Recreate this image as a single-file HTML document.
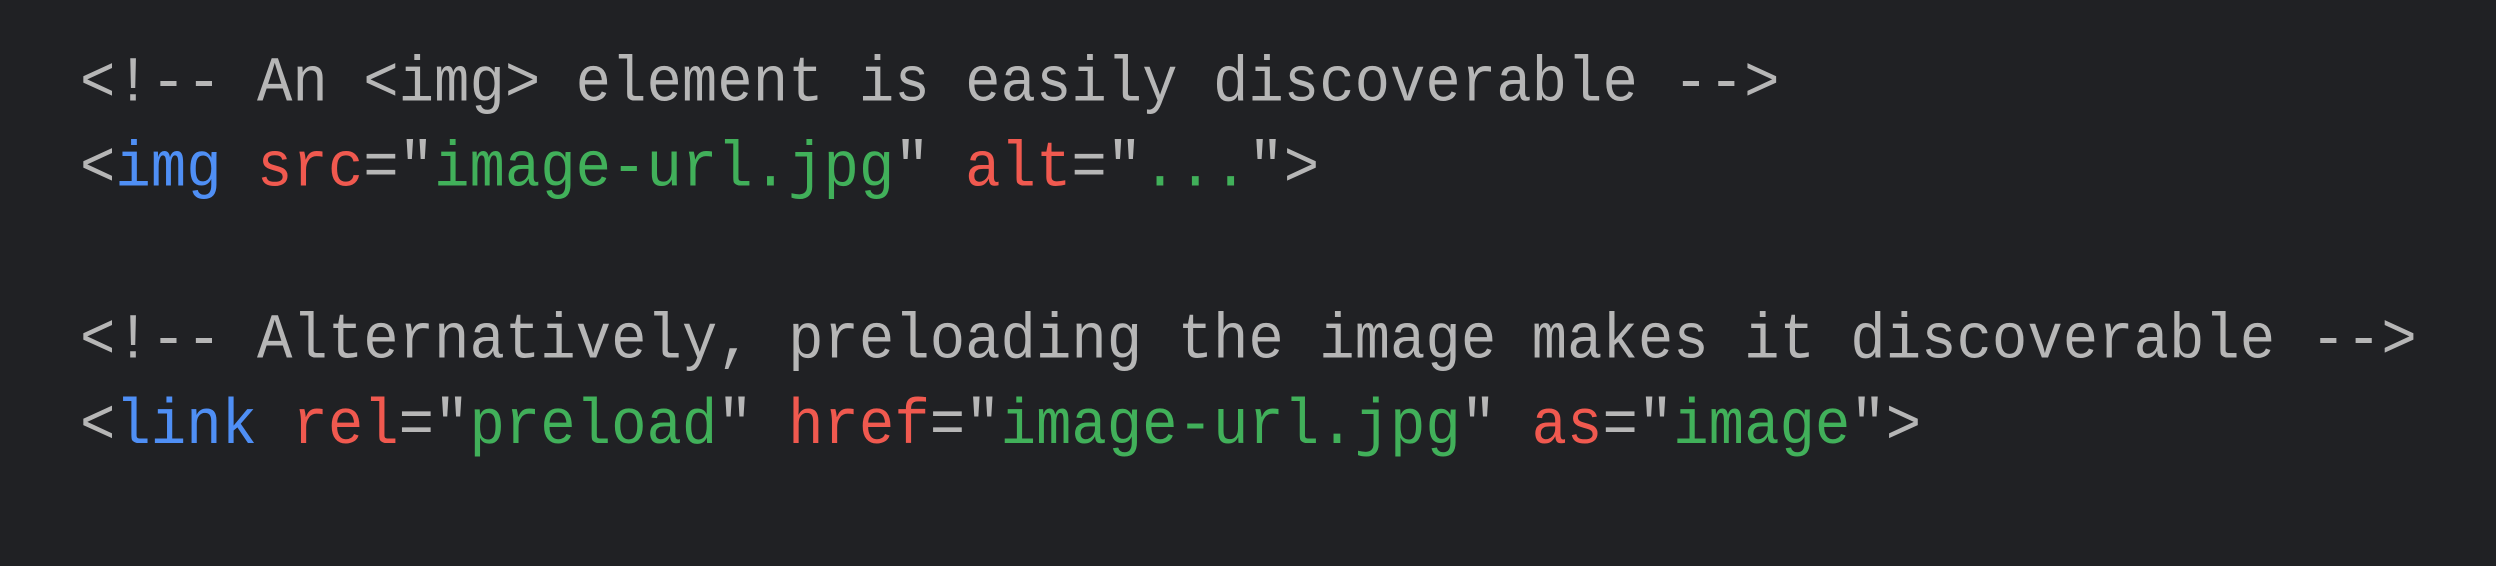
<!DOCTYPE html>
<html><head><meta charset="utf-8"><style>
html,body{margin:0;padding:0;background:#202124;width:2496px;height:566px;overflow:hidden}
pre{margin:0;position:absolute;left:80px;top:41px;font-family:"Liberation Mono",monospace;font-size:59px;line-height:79.2px;color:#b6b6b6;white-space:pre;transform:scaleY(1.08);transform-origin:0 0}
.b{color:#4f8ff5}.r{color:#f0594f}.g{color:#41b05a}
</style></head><body>
<pre>&lt;!-- An &lt;img&gt; element is easily discoverable --&gt;
&lt;<span class="b">img</span> <span class="r">src</span>="<span class="g">image-url.jpg</span>" <span class="r">alt</span>="<span class="g">...</span>"&gt;

&lt;!-- Alternatively, preloading the image makes it discoverable --&gt;
&lt;<span class="b">link</span> <span class="r">rel</span>="<span class="g">preload</span>" <span class="r">href</span>="<span class="g">image-url.jpg</span>" <span class="r">as</span>="<span class="g">image</span>"&gt;</pre>
</body></html>
